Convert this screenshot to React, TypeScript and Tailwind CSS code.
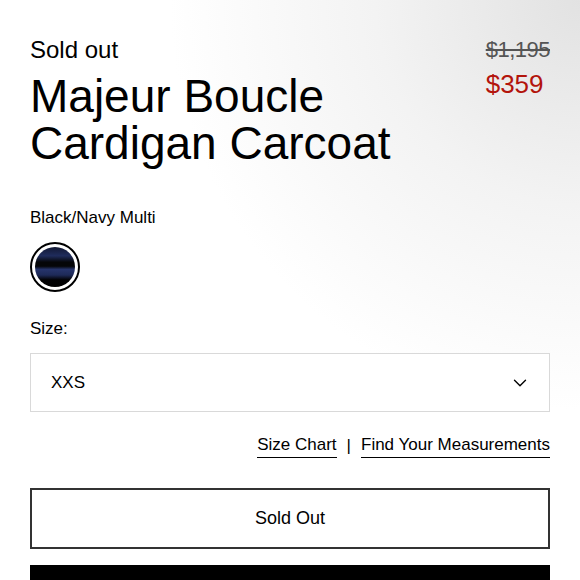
import { ChevronDown } from 'lucide-react';

export default function App() {
  return (
    <main
      className="w-[580px] h-[580px] overflow-hidden bg-white bg-[radial-gradient(ellipse_at_top_right,#e2e2e2_0%,#f3f3f3_25%,#ffffff_50%)] px-[30px] text-black"
      style={{ fontFamily: '"Liberation Sans", Arial, sans-serif' }}
    >
      {/* Heading + prices */}
      <section className="flex justify-between pt-[36px]">
        <div>
          <p className="text-[24px] leading-[28px]">Sold out</p>
          <h1 className="mt-[9px] text-[46px] leading-[47px]">
            Majeur Boucle
            <br />
            Cardigan Carcoat
          </h1>
        </div>
        <div className="flex flex-col items-start">
          <span className="text-[22px] leading-[28px] tracking-[-0.5px] text-[#555] line-through decoration-[#555]">$1,195</span>
          <span className="mt-[6px] text-[26px] leading-[28px] text-[#b3140c]">$359</span>
        </div>
      </section>

      {/* Colour */}
      <section className="mt-[41px]">
        <p className="text-[17px] leading-[20px]">Black/Navy Multi</p>
        <div className="mt-[14px] flex h-[50px] w-[50px] items-center justify-center rounded-full border-2 border-black bg-white">
          <div className="h-[40px] w-[40px] rounded-full bg-[linear-gradient(#121833_0%,#1f2c5c_22%,#050608_38%,#050608_48%,#26346b_56%,#1e2a58_70%,#020204_82%,#000_100%)]" />
        </div>
      </section>

      {/* Size */}
      <section className="mt-[27px]">
        <p className="text-[17px] leading-[20px]">Size:</p>
        <div className="mt-[14px] flex h-[59px] items-center justify-between border border-[#d9d9d9] bg-white pl-[20px] pr-[18px]">
          <span className="text-[17px]">XXS</span>
          <ChevronDown size={22} strokeWidth={1.5} />
        </div>
        <div className="mt-[22px] flex items-center justify-end gap-[10px] text-[17px] leading-[22px]">
          <a className="border-b border-black pb-[1px]">Size Chart</a>
          <span className="pb-[1px]">|</span>
          <a className="border-b border-black pb-[1px]">Find Your Measurements</a>
        </div>
      </section>

      {/* Actions */}
      <section className="mt-[30px]">
        <button className="flex h-[61px] w-full items-center justify-center border-2 border-[#333] bg-white text-[18px]">
          Sold Out
        </button>
        <div className="mt-[16px] h-[40px] w-full bg-black" />
      </section>
    </main>
  );
}
